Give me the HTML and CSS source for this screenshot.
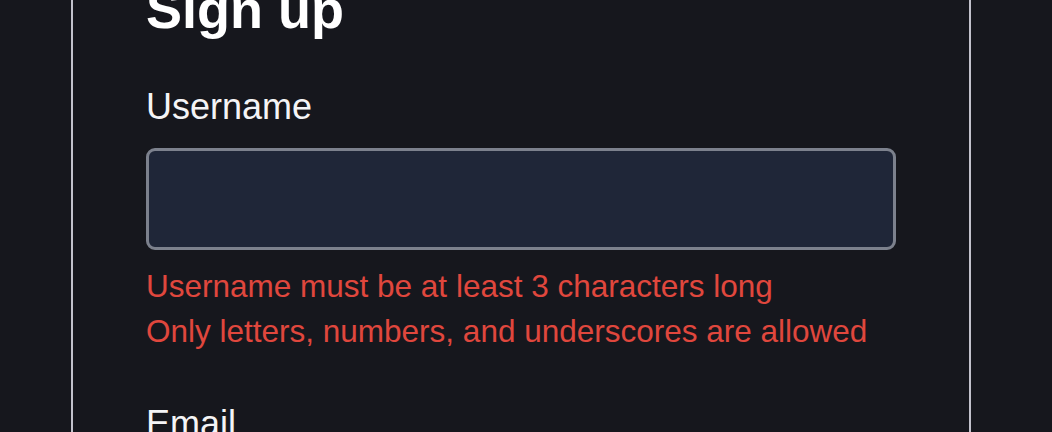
FILE: index.html
```html
<!DOCTYPE html>
<html lang="en">
<head>
<meta charset="utf-8">
<title>Sign up</title>
<link rel="stylesheet" href="styles.css">
</head>
<body>
  <main class="card">
    <h1 class="title">Sign up</h1>
    <form class="form">
      <div class="field">
        <label class="label" for="username">Username</label>
        <input class="input" id="username" type="text">
        <div class="errors">
          <div class="error">Username must be at least 3 characters long</div>
          <div class="error">Only letters, numbers, and underscores are allowed</div>
        </div>
      </div>
      <div class="field">
        <label class="label" for="email">Email</label>
        <input class="input" id="email" type="email">
      </div>
    </form>
  </main>
</body>
</html>
```
FILE: styles.css
```css
html, body {
  margin: 0;
  padding: 0;
  background: #16171d;
  overflow: hidden;
}
body {
  font-family: "Liberation Sans", Arial, sans-serif;
  color: #f2f2f4;
}
.card {
  box-sizing: border-box;
  width: 900px;
  margin: -92px 0 0 71px;
  padding: 72px 73px;
  border: 2px solid #c2c2cc;
  border-radius: 10px;
  min-height: 700px;
}
.title {
  margin: 0;
  font-size: 54px;
  line-height: 54px;
  font-weight: 700;
  color: #ffffff;
}
.form {
  display: flex;
  flex-direction: column;
  gap: 47px;
  margin-top: 48px;
}
.field {
  display: flex;
  flex-direction: column;
}
.label {
  font-size: 36px;
  line-height: 45px;
  color: #f4f4f6;
}
.input {
  box-sizing: border-box;
  margin-top: 19px;
  width: 750px;
  height: 102px;
  background: #1f2638;
  border: 3px solid #7c818d;
  border-radius: 9px;
  outline: none;
  padding: 0 20px;
  font-size: 31.5px;
  color: #f2f2f4;
  font-family: inherit;
}
.errors {
  margin-top: 14px;
  display: flex;
  flex-direction: column;
}
.error {
  font-size: 31.5px;
  line-height: 45px;
  color: #e0473d;
}
```
